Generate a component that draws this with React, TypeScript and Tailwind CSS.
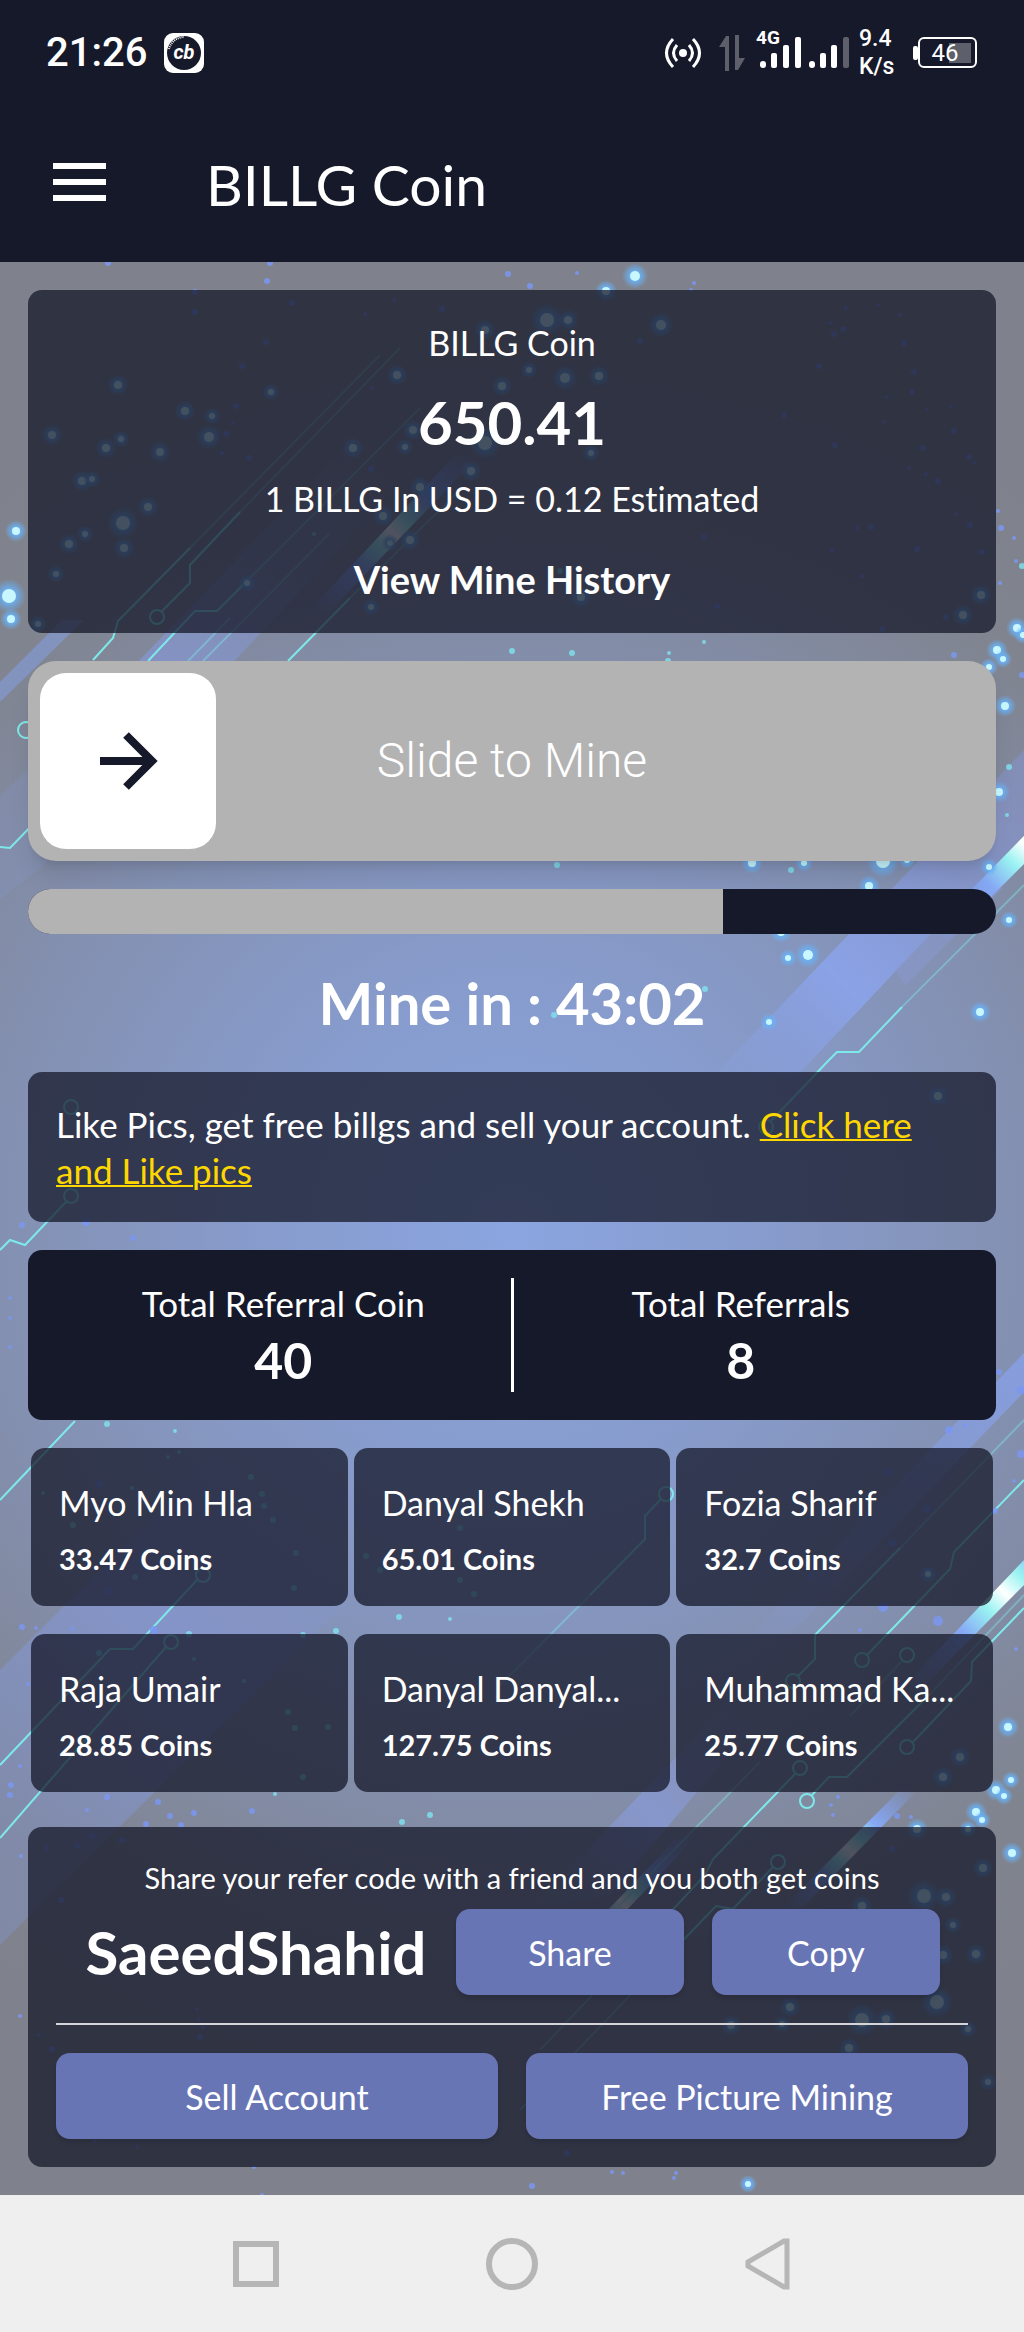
import { useState } from 'react';

type Dot = [number, number, number];

const referrals = [
    { name: 'Myo Min Hla', coins: '33.47' },
    { name: 'Danyal Shekh', coins: '65.01' },
    { name: 'Fozia Sharif', coins: '32.7' },
    { name: 'Raja Umair', coins: '28.85' },
    { name: 'Danyal Danyal...', coins: '127.75' },
    { name: 'Muhammad Ka...', coins: '25.77' },
];

// x, y, radius
const glowDots: Dot[] = [
    [16, 531, 4], [9, 596, 7], [11, 619, 4], [118, 385, 4], [185, 411, 4], [212, 416, 3], [209, 437, 5], [52, 435, 4],
    [106, 448, 4], [121, 439, 3], [160, 452, 4], [82, 481, 4], [92, 479, 3], [148, 507, 4], [123, 523, 7], [124, 548, 4],
    [85, 534, 3], [69, 544, 4], [56, 574, 3], [38, 624, 3], [271, 392, 3], [353, 448, 4], [397, 375, 4], [413, 430, 4],
    [405, 447, 3], [485, 330, 4], [471, 471, 4], [420, 487, 4], [410, 540, 4], [390, 543, 3], [247, 583, 3], [371, 607, 3],
    [383, 516, 4], [485, 443, 7], [502, 386, 4], [635, 276, 5], [606, 291, 4], [547, 320, 7], [568, 320, 4], [661, 325, 5],
    [529, 370, 3], [565, 378, 5], [599, 376, 4], [591, 453, 3], [581, 597, 4], [981, 595, 4], [963, 615, 4], [1017, 628, 4],
    [1023, 635, 3], [997, 650, 4], [1003, 659, 3], [989, 667, 3], [1005, 706, 4], [999, 792, 4], [752, 863, 4], [804, 863, 3],
    [883, 861, 7], [907, 860, 3], [869, 886, 4], [989, 867, 3], [808, 955, 5], [788, 958, 3], [769, 1022, 3], [980, 1012, 4],
    [1009, 920, 3], [781, 932, 4], [938, 1096, 4], [928, 1574, 3], [1008, 1727, 4], [960, 1757, 4], [943, 1777, 4], [1011, 1780, 3],
    [996, 1790, 4], [1004, 1796, 3], [976, 1812, 4], [982, 1820, 3], [1012, 1853, 4], [917, 1829, 4], [968, 1829, 3], [983, 1868, 4],
    [924, 1896, 7], [946, 1897, 4], [862, 1906, 4], [953, 1925, 3], [976, 1954, 4], [943, 1955, 4], [937, 2002, 7], [790, 2007, 4],
    [862, 2020, 7], [886, 2019, 4], [731, 2025, 4], [782, 2024, 3], [968, 2029, 3], [849, 2048, 4], [988, 2082, 3], [748, 2184, 3],
];

const blueDots: Dot[] = [
    [108, 263, 3], [270, 263, 3], [267, 281, 3], [195, 292, 3], [195, 312, 3], [292, 303, 3], [508, 274, 3], [577, 273, 2],
    [530, 286, 3], [694, 283, 2], [691, 290, 2], [394, 300, 2], [365, 314, 2], [442, 309, 3], [266, 342, 3], [242, 366, 3],
    [236, 406, 3], [233, 423, 2], [226, 434, 3], [249, 458, 3], [222, 453, 2], [372, 388, 2], [371, 469, 3], [640, 341, 3],
    [846, 308, 2], [878, 305, 2], [900, 315, 2], [831, 323, 2], [843, 329, 3], [834, 334, 3], [904, 343, 3], [819, 366, 3],
    [914, 372, 3], [912, 392, 3], [887, 397, 2], [927, 409, 2], [951, 407, 2], [784, 415, 3], [884, 422, 2], [954, 431, 3],
    [835, 445, 3], [923, 448, 3], [969, 457, 3], [975, 463, 2], [909, 468, 2], [926, 474, 2], [938, 481, 3], [956, 514, 2],
    [970, 525, 3], [871, 527, 3], [857, 528, 2], [998, 511, 2], [1001, 528, 3], [1014, 538, 2], [1000, 583, 2], [1016, 561, 2],
    [832, 550, 2], [862, 576, 2], [704, 537, 3], [917, 549, 3], [982, 552, 3], [717, 606, 3], [882, 629, 3], [946, 617, 3],
    [954, 655, 3], [1022, 675, 3], [22, 1225, 3], [86, 1222, 4], [133, 1238, 3], [10, 1298, 2], [10, 1318, 2], [10, 1347, 2],
    [999, 1372, 3], [1021, 1390, 4], [965, 1425, 2], [949, 1430, 4], [99, 1484, 4], [109, 1591, 4], [22, 1627, 3], [36, 1628, 2],
    [72, 1629, 2], [154, 1630, 4], [28, 1684, 2], [11, 1785, 3], [10, 1795, 3], [20, 1766, 2], [107, 1797, 3], [158, 1802, 3],
    [87, 1810, 2], [170, 1816, 3], [194, 1813, 3], [252, 1811, 3], [146, 1824, 3], [181, 1825, 3], [938, 1621, 5], [883, 1607, 5],
    [887, 1472, 4], [927, 1509, 4], [892, 1543, 4], [810, 1577, 3], [1014, 1481, 2], [995, 1511, 3], [1021, 1454, 4], [1016, 1649, 2],
    [860, 1630, 2], [838, 1797, 2], [833, 1815, 2], [831, 1805, 2], [897, 1816, 3], [911, 1817, 2], [892, 1849, 3], [21, 1856, 2],
    [20, 2016, 2], [47, 1848, 3], [92, 1836, 3], [77, 1846, 3], [122, 1840, 3], [61, 1900, 3], [200, 2037, 3], [197, 2009, 2],
    [199, 2019, 2], [203, 2027, 2], [52, 2049, 3], [39, 2035, 2], [254, 2167, 2], [262, 2195, 2], [137, 2147, 2], [95, 2141, 2],
    [676, 2173, 2], [674, 2178, 2], [612, 2172, 2], [623, 2173, 2], [532, 2186, 3], [567, 2153, 3],
];

const tealDots: Dot[] = [
    [572, 653, 3], [512, 651, 3], [668, 661, 3], [669, 653, 2], [704, 642, 2], [557, 865, 3], [791, 870, 3], [705, 989, 3],
    [554, 1015, 3], [1009, 767, 3], [1007, 815, 2], [1022, 566, 3], [107, 1424, 3], [175, 1431, 2], [179, 1452, 2], [168, 1457, 2],
    [251, 1477, 3], [262, 1494, 3], [264, 1506, 3], [273, 1520, 3], [132, 1488, 2], [43, 1493, 2], [73, 1525, 3], [296, 1553, 3],
    [294, 1588, 3], [135, 1577, 3], [460, 1528, 3], [366, 1556, 3], [380, 1570, 3], [460, 1580, 3], [474, 1594, 3], [399, 1617, 3],
    [450, 1619, 2], [336, 1631, 3], [303, 1635, 3], [189, 1634, 3], [99, 1653, 3], [194, 1659, 2], [244, 1681, 2], [288, 1712, 3],
    [295, 1728, 3], [328, 1727, 3], [275, 1794, 2], [303, 1777, 3], [430, 1815, 3], [402, 1822, 3], [314, 534, 2], [560, 571, 3],
];

// Traces that keep one strength over their whole length
const traces = [
    'M93 660 113 638 118 621 190 548',
    'M148 661 195 611 217 611 245 583',
    'M162 611 190 583 190 565 240 512',
    'M288 661 350 598',
    'M0 847 10 848 40 817',
    'M902 1007 859 1052 837 1052 829 1060 771 1121',
    'M66 1202 25 1245 10 1240 0 1250',
    'M75 1421 0 1500',
    'M197 1580 133 1649 110 1649 0 1765',
    'M166 1647 0 1838',
    'M798 1676 815 1659 815 1635 900 1548',
    'M867 1655 950 1569 954 1552 1024 1480',
    'M913 1742 971 1681 972 1662 1024 1608',
    'M812 1795 829 1777 847 1777 930 1694',
    'M795 1774 713 1859 705 1875 640 1945',
    'M773 1867 733 1909 716 1906 640 1985',
    'M661 1499 645 1516 645 1539 590 1595',
];

// The same lines further out, where they are weaker
const faintTraces = [
    'M190 548 380 355',
    'M245 583 420 408',
    'M203 661 330 533',
    'M188 661 230 618',
    'M240 512 400 348',
    'M350 598 460 490',
    'M1024 885 902 1007',
    'M900 1548 1024 1420',
    'M930 1694 1024 1595',
    'M902 1661 850 1716',
    'M760 1762 620 1905',
    'M640 1945 540 2050',
    'M640 1985 520 2110',
    'M590 1595 500 1685',
];

const nodes: Dot[] = [
    [157, 617, 7], [26, 730, 8], [71, 1107, 7], [71, 1196, 7], [766, 1127, 7], [203, 1575, 7], [171, 1642, 7], [666, 1494, 7],
    [793, 1681, 7], [862, 1660, 7], [907, 1655, 7], [907, 1747, 7], [807, 1801, 7], [800, 1768, 7], [778, 1862, 7],
];

const Backdrop = () => (
    <svg className="absolute inset-0 h-full w-full" viewBox="0 262 1024 1933" preserveAspectRatio="none" aria-hidden="true">
        <defs>
            <radialGradient id="base" gradientUnits="userSpaceOnUse" cx="512" cy="1230" r="900">
                <stop offset="0" stopColor="#8aa5e0" />
                <stop offset="0.3" stopColor="#879bcb" />
                <stop offset="0.6" stopColor="#838fae" />
                <stop offset="0.85" stopColor="#80848f" />
                <stop offset="1" stopColor="#7f828d" />
            </radialGradient>
            <radialGradient id="glow">
                <stop offset="0.35" stopColor="#69b2f7" stopOpacity="0.95" />
                <stop offset="1" stopColor="#69b2f7" stopOpacity="0" />
            </radialGradient>
            <linearGradient id="beam" gradientUnits="userSpaceOnUse" x1="1024" y1="790" x2="720" y2="1110">
                <stop offset="0" stopColor="#8592c8" stopOpacity="0.6" />
                <stop offset="0.6" stopColor="#8aa2e6" />
                <stop offset="1" stopColor="#8aa2e6" stopOpacity="0" />
            </linearGradient>
            <linearGradient id="beamLow" gradientUnits="userSpaceOnUse" x1="1024" y1="1370" x2="740" y2="1650">
                <stop offset="0" stopColor="#879fe2" stopOpacity="0.9" />
                <stop offset="1" stopColor="#879fe2" stopOpacity="0" />
            </linearGradient>
            <linearGradient id="beamTop" gradientUnits="userSpaceOnUse" x1="170" y1="680" x2="400" y2="440">
                <stop offset="0" stopColor="#8494c8" stopOpacity="0.9" />
                <stop offset="1" stopColor="#8494c8" stopOpacity="0" />
            </linearGradient>
            <linearGradient id="beamLeft" gradientUnits="userSpaceOnUse" x1="0" y1="1860" x2="330" y2="1500">
                <stop offset="0" stopColor="#8190be" stopOpacity="0.5" />
                <stop offset="0.6" stopColor="#8595cb" stopOpacity="0.9" />
                <stop offset="1" stopColor="#8595cb" stopOpacity="0" />
            </linearGradient>
            <linearGradient id="beamBottom" gradientUnits="userSpaceOnUse" x1="740" y1="1690" x2="540" y2="1910">
                <stop offset="0" stopColor="#8797cc" stopOpacity="0" />
                <stop offset="0.5" stopColor="#8797cc" />
                <stop offset="1" stopColor="#8797cc" stopOpacity="0" />
            </linearGradient>
            <linearGradient id="streak" x1="1" y1="0" x2="0" y2="1">
                <stop offset="0" stopColor="#7f9cf0" stopOpacity="0" />
                <stop offset="0.3" stopColor="#86a9f5" />
                <stop offset="0.42" stopColor="#9af3f2" />
                <stop offset="0.5" stopColor="#ffffff" />
                <stop offset="0.58" stopColor="#9af3f2" />
                <stop offset="0.7" stopColor="#86a9f5" />
                <stop offset="1" stopColor="#7f9cf0" stopOpacity="0" />
            </linearGradient>
        </defs>
        <rect y="262" width="1024" height="1933" fill="url(#base)" />

        <path d="M130 670 390 400H480L226 670Z" fill="url(#beamTop)" />
        <path d="M0 682 62 620H84L0 702Z" fill="#8398d2" opacity="0.7" />
        <path d="M0 796 140 661H300L0 900Z" fill="#8698cc" opacity="0.25" />
        <path d="M712 1078 1024 750V835L795 1078Z" fill="url(#beam)" />
        <path d="M895 970 975 888H1003L905 986Z" fill="#8a9cd6" opacity="0.4" />
        <path d="M0 1670 240 1430H520L0 1945Z" fill="url(#beamLeft)" />
        <path d="M750 1635 1024 1353V1392L790 1635Z" fill="url(#beamLow)" />
        <path d="M530 1909 760 1670H800L610 1895Z" fill="url(#beamBottom)" />

        <path d="M310 610 455 455H480L325 616Z" fill="url(#streak)" />
        <path d="M930 932 1100 758H1130L948 940Z" fill="url(#streak)" />
        <path d="M900 1690 1085 1496H1112L918 1692Z" fill="url(#streak)" />
        <path d="M780 1910 900 1790H918L800 1910Z" fill="url(#streak)" />
        <path d="M550 1970 680 1835H698L566 1974Z" fill="url(#streak)" />

        <g fill="none" stroke="#7ee9ea" strokeWidth="2">
            {traces.map(d => <path key={d} d={d} />)}
            {nodes.map(([x, y, r]) => <circle key={`${x}-${y}`} cx={x} cy={y} r={r} />)}
        </g>
        <g fill="none" stroke="#7ee9ea" strokeWidth="2" opacity="0.4">
            {faintTraces.map(d => <path key={d} d={d} />)}
        </g>

        <g fill="#7fe4f0" opacity="0.8">
            {tealDots.map(([x, y, r]) => <circle key={`${x}-${y}`} cx={x} cy={y} r={r} />)}
        </g>
        <g fill="#7b97f2" opacity="0.85">
            {blueDots.map(([x, y, r]) => <circle key={`${x}-${y}`} cx={x} cy={y} r={r} />)}
        </g>
        {glowDots.map(([x, y, r]) => (
            <g key={`${x}-${y}`}>
                <circle cx={x} cy={y} r={r * 2 + 3} fill="url(#glow)" />
                <circle cx={x} cy={y} r={r} fill="#c8f7ff" />
            </g>
        ))}
    </svg>
);

const StatusBar = () => (
    <div className="flex h-[106px] items-center justify-between pr-[47px] pl-[46px] font-[Roboto,sans-serif] text-white">
        <div className="flex items-center gap-[17px]">
            <span className="text-[40px] leading-[48px] font-medium">21:26</span>
            <svg width="40" height="40" viewBox="0 0 40 40">
                <rect width="40" height="40" rx="9" fill="#fff" />
                <circle cx="20" cy="20" r="17" fill="#16192a" />
                <path d="M5 16A16 16 0 0 1 20 4" fill="none" stroke="#fff" strokeWidth="2" strokeDasharray="1 1" />
                <text x="20" y="26" textAnchor="middle" fontSize="20" fontWeight="700" fontStyle="italic" fill="#fff">cb</text>
            </svg>
        </div>
        <div className="flex items-center">
            <svg className="mr-[17px]" width="38" height="32" viewBox="0 0 38 32" fill="none" stroke="#fff" strokeWidth="4">
                <circle cx="19" cy="16" r="4" fill="#fff" stroke="none" />
                <path d="M13 8Q6 16 13 24M25 8Q32 16 25 24" strokeWidth="3" />
                <path d="M9 2Q-4 16 9 30M29 2Q42 16 29 30" strokeWidth="3" />
            </svg>
            <svg className="mr-3" width="26" height="36" viewBox="0 0 26 36" fill="#5d5f6a">
                <path d="M6 36V12H0L7 1H10V36ZM16 0H20V23H26L19 35H16Z" />
            </svg>
            <svg className="mr-[10px] overflow-visible" width="92" height="42" viewBox="0 0 92 42" fill="#fff">
                <text x="-1" y="12" fontSize="19" fontWeight="700">4G</text>
                <rect x="3" y="29" width="6" height="7" rx="3" />
                <rect x="14" y="21" width="6" height="15" rx="2" />
                <rect x="26" y="13" width="6" height="23" rx="2" />
                <rect x="38" y="5" width="6" height="31" rx="2" />
                <rect x="52" y="29" width="6" height="7" rx="3" />
                <rect x="63" y="21" width="6" height="15" rx="2" />
                <rect x="74" y="13" width="6" height="23" rx="2" />
                <rect x="86" y="5" width="6" height="31" rx="2" fill="#5d5f6a" />
            </svg>
            <div className="mr-5 w-[34px] text-[23px] leading-[28px] font-medium">
                <p>9.4</p>
                <p>K/s</p>
            </div>
            <svg width="64" height="32" viewBox="0 0 64 32">
                <rect x="0" y="9" width="5" height="14" rx="2" fill="#fff" />
                <rect x="6" y="1" width="57" height="29" rx="5" fill="none" stroke="#fff" strokeWidth="2" />
                <rect x="36" y="6" width="22" height="20" fill="#5d5f6a" />
                <text x="32" y="24" textAnchor="middle" fontSize="24" fill="#fff">46</text>
            </svg>
        </div>
    </div>
);

const panel = 'rounded-[14px] bg-[#16182a]/75';
const action = 'h-[86px] rounded-[14px] bg-[#6875b5] text-[34px] shadow-md';

export default function App() {
    const [progress] = useState(71.8);

    return (
        <div className="min-h-screen bg-[#efefef] font-[Lato,sans-serif] text-white [font-variant-ligatures:none]">
            <header className="bg-[#16192a]">
                <StatusBar />
                <div className="flex h-[156px] items-center pb-1 pl-[53px]">
                    <button aria-label="Menu" className="flex w-[53px] flex-col gap-[10px]">
                        <span className="h-[6px] bg-white" />
                        <span className="h-[6px] bg-white" />
                        <span className="h-[6px] bg-white" />
                    </button>
                    <h1 className="ml-[100px] pt-1 text-[57px] leading-[80px]">BILLG Coin</h1>
                </div>
            </header>

            <main className="relative">
                <Backdrop />
                <div className="relative flex flex-col gap-7 p-7">
                    <section className={`${panel} flex flex-col items-center p-7 text-center`}>
                        <p className="text-[34px] leading-[50px]">BILLG Coin</p>
                        <p className="mt-[14px] text-[60px] leading-[80px] font-bold">650.41</p>
                        <p className="mt-3 text-[34px] leading-[50px]">1 BILLG In USD = 0.12 Estimated</p>
                        <a href="#history" className="mt-[30px] text-[38px] leading-[51px] font-bold">View Mine History</a>
                    </section>

                    <div className="grid grid-cols-[176px_1fr_176px] items-center rounded-[28px] bg-[#b3b3b3] p-3 shadow-xl">
                        <button aria-label="Start mining" className="flex size-44 items-center justify-center rounded-[26px] bg-white">
                            <svg width="60" height="60" viewBox="0 0 60 60" fill="none" stroke="#16192a" strokeWidth="8">
                                <path d="M2 30H54M28 4 54 30 28 56" />
                            </svg>
                        </button>
                        <p className="text-center font-[Roboto,sans-serif] text-[48px] font-light">Slide to Mine</p>
                    </div>

                    <div role="progressbar" aria-valuenow={progress} className="h-[45px] overflow-hidden rounded-full bg-[#16192a]">
                        <div className="h-full bg-[#b3b3b3]" style={{ width: `${progress}%` }} />
                    </div>

                    <p className="text-center text-[58px] leading-[82px] font-bold">Mine in : 43:02</p>

                    <section className={`${panel} px-7 py-[29px]`}>
                        <p className="text-[35px] leading-[46px]">
                            Like Pics, get free billgs and sell your account.{' '}
                            <a href="#pics" className="text-[#ffd700] underline decoration-2">Click here and Like pics</a>
                        </p>
                    </section>

                    <section className="flex rounded-[14px] bg-[#16192a] p-7 text-center">
                        <div className="flex-1">
                            <p className="text-[35px] leading-[50px]">Total Referral Coin</p>
                            <p className="text-[50px] leading-[64px] font-bold">40</p>
                        </div>
                        <div className="w-[3px] bg-white" />
                        <div className="flex-1">
                            <p className="text-[35px] leading-[50px]">Total Referrals</p>
                            <p className="text-[50px] leading-[64px] font-bold">8</p>
                        </div>
                    </section>

                    <ul className="grid grid-cols-3 gap-x-[6px] gap-y-7 px-[3px] pb-[7px]">
                        {referrals.map(r => (
                            <li key={r.name} className={`${panel} px-7 pt-[30px] pb-6`}>
                                <p className="text-[34px] leading-[50px] whitespace-nowrap">{r.name}</p>
                                <p className="mt-2 text-[29px] leading-[46px] font-bold">{r.coins} Coins</p>
                            </li>
                        ))}
                    </ul>

                    <section className={`${panel} p-7`}>
                        <p className="text-center text-[29px] leading-[46px]">Share your refer code with a friend and you both get coins</p>
                        <div className="mt-2 flex items-center gap-7 px-7">
                            <p className="flex-1 text-center text-[60px] leading-[80px] font-bold">SaeedShahid</p>
                            <button className={`${action} w-[228px]`}>Share</button>
                            <button className={`${action} w-[228px]`}>Copy</button>
                        </div>
                        <hr className="my-7 border-t-2 border-[#d5d5d9]" />
                        <div className="grid grid-cols-2 gap-7">
                            <button className={action}>Sell Account</button>
                            <button className={action}>Free Picture Mining</button>
                        </div>
                    </section>
                </div>
            </main>

            <nav className="grid h-[137px] grid-cols-3 place-items-center bg-[#efefef] px-[12.5%]">
                <button aria-label="Recent apps">
                    <svg width="54" height="54" viewBox="0 0 54 54" fill="none" stroke="#b6b6b6" strokeWidth="6">
                        <rect x="7" y="7" width="40" height="40" />
                    </svg>
                </button>
                <button aria-label="Home">
                    <svg width="54" height="54" viewBox="0 0 54 54" fill="none" stroke="#b6b6b6" strokeWidth="6">
                        <circle cx="27" cy="27" r="23" />
                    </svg>
                </button>
                <button aria-label="Back">
                    <svg width="54" height="54" viewBox="0 0 54 54" fill="none" stroke="#b6b6b6" strokeWidth="5">
                        <path d="M46 4V50L43 50 7 29V25L43 4Z" />
                    </svg>
                </button>
            </nav>
        </div>
    );
}
